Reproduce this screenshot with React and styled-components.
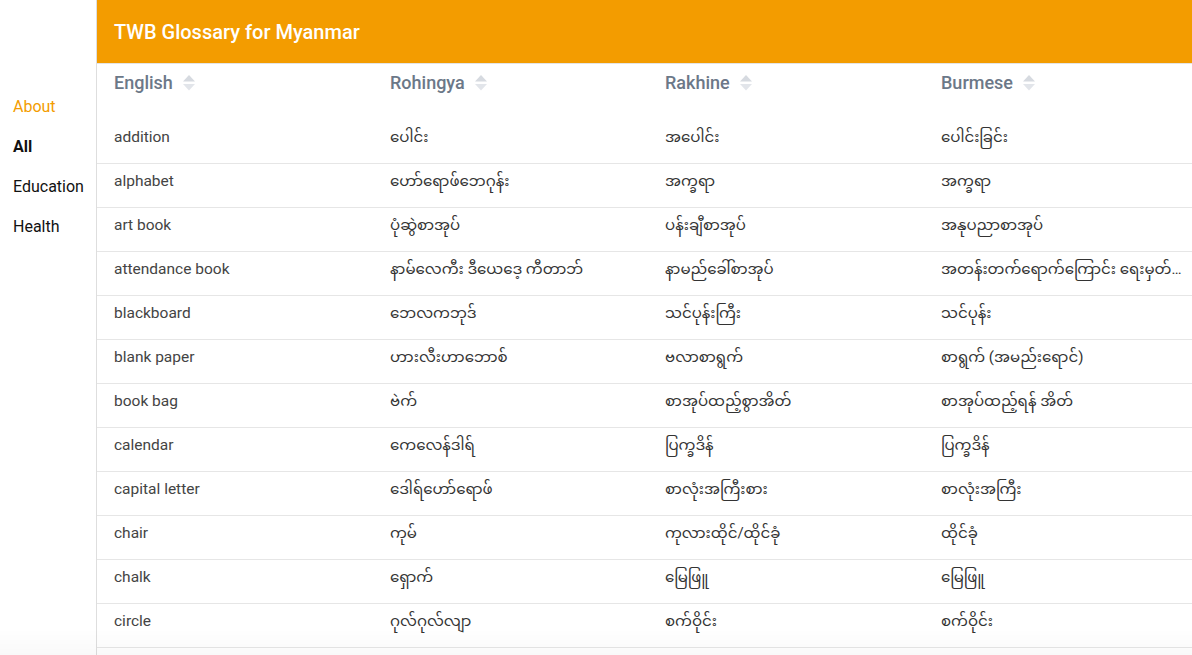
import React from 'react';
import styled, { createGlobalStyle } from 'styled-components';

const GlobalStyle = createGlobalStyle`
  html, body {
    margin: 0;
    padding: 0;
    background: #fff;
    overflow: hidden;
  }
  body {
    font-family: Roboto, "Noto Sans Myanmar", Padauk, "Myanmar Text", "Noto Sans", sans-serif;
  }
`;

const columns = [
  { name: 'English', width: 276 },
  { name: 'Rohingya', width: 275 },
  { name: 'Rakhine', width: 276 },
  { name: 'Burmese', width: 277 },
];

const rows = [
  ['addition', 'ပေါင်း', 'အပေါင်း', 'ပေါင်းခြင်း'],
  ['alphabet', 'ဟော်ရောဖ်ဘေဂုန်း', 'အက္ခရာ', 'အက္ခရာ'],
  ['art book', 'ပုံဆွဲစာအုပ်', 'ပန်းချီစာအုပ်', 'အနုပညာစာအုပ်'],
  ['attendance book', 'နာမ်လေကီး ဒီယေဒေ့ ကီတာဘ်', 'နာမည်ခေါ်စာအုပ်', 'အတန်းတက်ရောက်ကြောင်း ရေးမှတ်စာအုပ်'],
  ['blackboard', 'ဘေလကဘုဒ်', 'သင်ပုန်းကြီး', 'သင်ပုန်း'],
  ['blank paper', 'ဟားလီးဟာဘောစ်', 'ဗလာစာရွက်', 'စာရွက် (အမည်းရောင်)'],
  ['book bag', 'ဗဲက်', 'စာအုပ်ထည့်စွာအိတ်', 'စာအုပ်ထည့်ရန် အိတ်'],
  ['calendar', 'ကေလေန်ဒါရ်', 'ပြက္ခဒိန်', 'ပြက္ခဒိန်'],
  ['capital letter', 'ဒေါရ်ဟော်ရောဖ်', 'စာလုံးအကြီးစား', 'စာလုံးအကြီး'],
  ['chair', 'ကုမ်', 'ကုလားထိုင်/ထိုင်ခုံ', 'ထိုင်ခုံ'],
  ['chalk', 'ရှောက်', 'မြေဖြူ', 'မြေဖြူ'],
  ['circle', 'ဂုလ်ဂုလ်လျာ', 'စက်ဝိုင်း', 'စက်ဝိုင်း'],
];

const navItems = [
  { label: 'About', kind: 'link' },
  { label: 'All', kind: 'active' },
  { label: 'Education', kind: 'plain' },
  { label: 'Health', kind: 'plain' },
];

function SortIcon() {
  return (
    <svg width="12" height="17" viewBox="0 0 12 17">
      <path d="M6 0 L12 6.5 L0 6.5 Z" fill="#d6dae0" />
      <path d="M0 9 L12 9 L6 15.5 Z" fill="#e2e5ea" />
    </svg>
  );
}

export default function App() {
  return (
    <>
      <GlobalStyle />
      <Page>
        <Sidebar>
          <Nav>
            {navItems.map(item => (
              <NavItem key={item.label} $kind={item.kind}>{item.label}</NavItem>
            ))}
          </Nav>
        </Sidebar>
        <Main>
          <TopBar>TWB Glossary for Myanmar</TopBar>
          <TableWrap>
            <Table>
              <colgroup>
                {columns.map(c => <col key={c.name} style={{ width: c.width }} />)}
              </colgroup>
              <thead>
                <tr>
                  {columns.map(c => (
                    <HeadCell key={c.name}>
                      <HeadInner>
                        {c.name}
                        <SortIcon />
                      </HeadInner>
                    </HeadCell>
                  ))}
                </tr>
              </thead>
              <tbody>
                {rows.map(r => (
                  <Row key={r[0]}>
                    {r.map((v, i) => <Cell key={i} $latin={i === 0}>{v}</Cell>)}
                  </Row>
                ))}
              </tbody>
            </Table>
          </TableWrap>
        </Main>
      </Page>
      <BottomFade />
    </>
  );
}

const Page = styled.div`
  display: flex;
  height: 655px;
  width: 100%;
  overflow: hidden;
`;

const Sidebar = styled.aside`
  width: 96px;
  flex: none;
  border-right: 1px solid #dedede;
  background: #fff;
`;

const Nav = styled.nav`
  display: flex;
  flex-direction: column;
  padding-top: 87px;
`;

const NavItem = styled.a`
  display: block;
  height: 40px;
  line-height: 40px;
  padding-left: 13px;
  font-size: 16px;
  font-weight: ${p => (p.$kind === 'active' ? 700 : 400)};
  color: ${p => (p.$kind === 'link' ? '#f39c00' : '#111')};
  cursor: pointer;
  white-space: nowrap;
`;

const Main = styled.main`
  flex: 1;
  min-width: 0;
  display: flex;
  flex-direction: column;
  overflow: hidden;
`;

const TopBar = styled.header`
  height: 64px;
  flex: none;
  background: #f39c00;
  color: #fff;
  font-size: 20px;
  font-weight: 500;
  padding-left: 17px;
  display: flex;
  align-items: center;
  border-bottom: 1px solid #e4e4e4;
  box-sizing: border-box;
  padding-top: 1px;
`;

const TableWrap = styled.div`
  flex: 1;
  overflow: hidden;
`;

const Table = styled.table`
  width: 1104px;
  table-layout: fixed;
  border-collapse: collapse;
`;

const HeadCell = styled.th`
  text-align: left;
  padding: 9px 17px 27px;
  font-size: 18px;
  font-weight: 500;
  color: #6c7888;
  line-height: 20px;
`;

const HeadInner = styled.span`
  display: inline-flex;
  align-items: center;
  gap: 10px;
`;

const Row = styled.tr`
  border-bottom: 1px solid #e6e6e6;
`;

const Cell = styled.td`
  padding: 7px 17px 16px;
  height: 20px;
  line-height: 20px;
  font-size: ${p => (p.$latin ? '15.5px' : '15px')};
  color: ${p => (p.$latin ? '#444' : '#333')};
  white-space: nowrap;
  overflow: hidden;
  text-overflow: ellipsis;
  vertical-align: top;
`;

const BottomFade = styled.div`
  position: fixed;
  left: 0;
  right: 0;
  bottom: 0;
  height: 26px;
  pointer-events: none;
  background: linear-gradient(to bottom, rgba(0, 0, 0, 0), rgba(0, 0, 0, 0.025));
`;
